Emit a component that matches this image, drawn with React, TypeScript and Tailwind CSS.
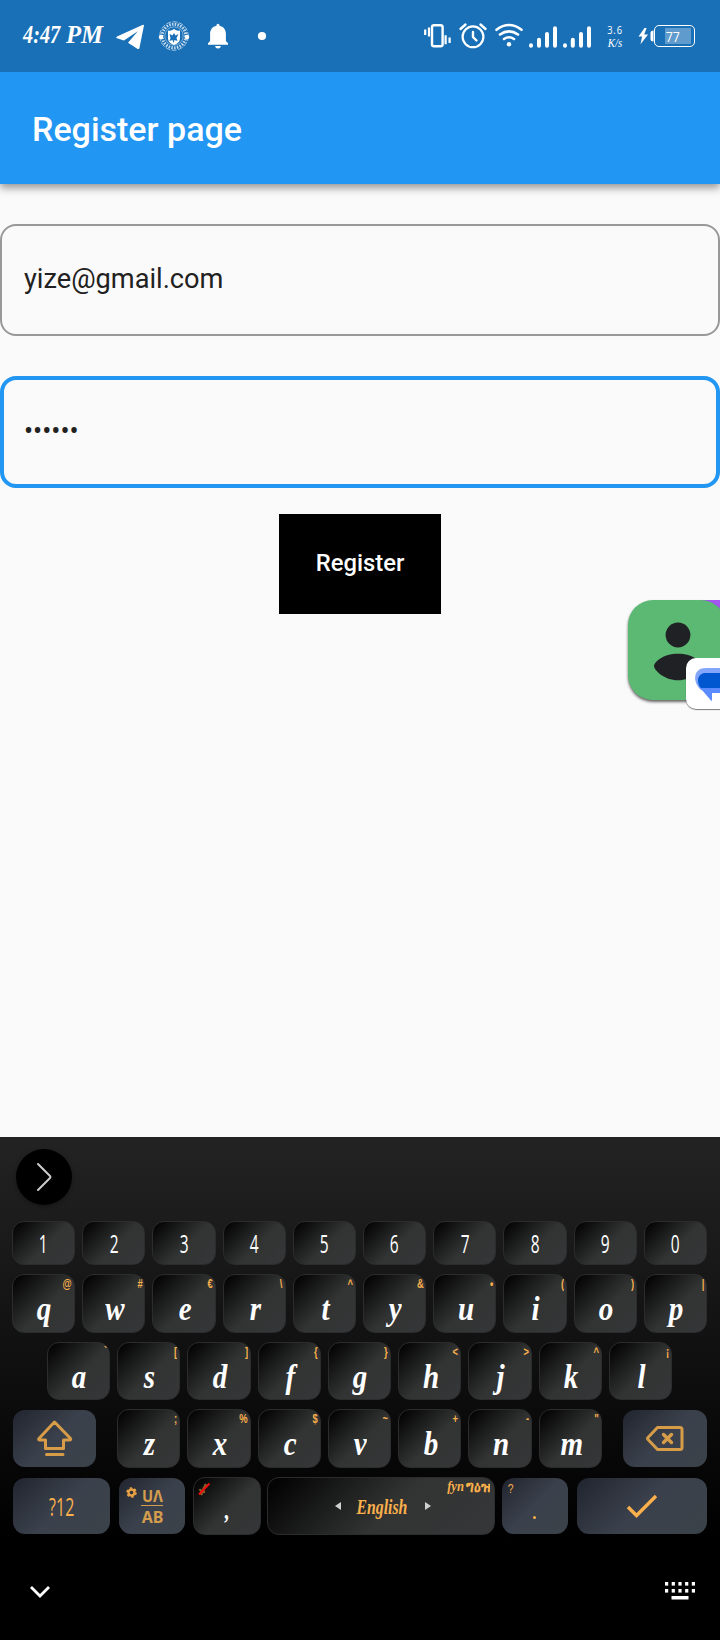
import React from "react";

const FONT_UI = "font-[Roboto,sans-serif]";

function StatusBar() {
  return (
    <header className="relative z-10 flex h-[72px] items-center bg-[#1a70b7] text-white">
      <div className="flex h-full w-[109px] items-center gap-[7px] pl-[23px] pb-[3px] font-['Liberation_Serif',serif] text-[26px] font-bold italic leading-none">
        <span className="w-[36px] origin-left scale-x-[.78] whitespace-nowrap">4:47</span>
        <span className="w-[37px] origin-left scale-x-[.95] whitespace-nowrap">PM</span>
      </div>
      <svg width="171" height="72" viewBox="109 0 171 72" className="shrink-0" fill="white">
        <path d="M144 25.2 139.4 48.2Q138.8 49.6 137.3 48.7L128 42.7 137.8 31.2 123.9 40.4 117 38.3Q115.2 37.4 117 36.4L142.4 25Q144 24.4 144 25.2Z" />
        <g fill="none" stroke="white">
          <circle cx="174" cy="36" r="14.2" strokeWidth="1" strokeDasharray="5 1.500" opacity=".6" />
          <circle cx="174" cy="36" r="9.2" strokeWidth=".8" opacity=".55" />
          <circle cx="174" cy="36" r="11.8" strokeWidth="3" strokeDasharray="1.5 1.3" opacity=".75" />
        </g>
        <circle cx="161" cy="37" r="2.2" />
        <circle cx="187" cy="37" r="2.2" />
        <path d="M168 30.500q3 1 6-1.500 3 2.500 6 1.500v8q0 4-6 6.500q-6-2.500-6-6.500Z" />
        <path d="m169.500 34 3 1.500 1.500-2.500 1.500 2.500 3-1.500-2 4 1 3-3-1-1 3-1-3-3 1 1-3Z" fill="#1a70b7" />
        <path d="M216.500 25.500v-.2a1.500 1.500 0 0 1 3 0v.4c4 .8 6.400 4 6.400 8v7.300l2.100 2.200v1.600h-20v-1.600l2.100-2.200v-7.300c0-4 2.400-7.200 6.400-8ZM215.200 46h5.600a2.800 2.400 0 0 1-5.600 0Z" />
        <circle cx="262" cy="36" r="4.100" />
      </svg>
      <svg width="195" height="72" viewBox="422 0 195 72" className="ml-[142px] shrink-0" fill="none" stroke="white">
        <rect x="432" y="25.200" width="10.600" height="21" rx="2" strokeWidth="2.400" />
        <path d="M425.200 29.500v5.500M429 27.500v9M445.600 35.200v9M449.600 37.500v5.500" strokeWidth="2.200" />
        <circle cx="473" cy="36.800" r="10.400" strokeWidth="2.200" />
        <path d="M473 32v5l3.500 3.500M460.500 29l5-4.500M485.500 29l-5-4.500" strokeWidth="2.400" strokeLinecap="round" />
        <path d="M496.500 29.800q12.500-9.600 25 0M500 34.500q9-6.400 18 0M504 39q5-3.400 10 0" strokeWidth="2.600" strokeLinecap="round" />
        <circle cx="509" cy="44.200" r="2.200" fill="white" stroke="none" />
        <g strokeWidth="4" strokeLinecap="round">
          <path d="M531 45.200v.5M539 39.800v6M547 34v11.800M555 28.300v17.500M565 45.200v.5M572.800 39.800v6M581 34v11.800M589 28.300v17.500" />
        </g>
      </svg>
      <div className="-ml-[12px] mr-[3px] flex w-[20px] shrink-0 flex-col gap-[3px] text-center font-['Open_Sans',sans-serif] text-[11px] leading-[10px]">
        <span className="scale-x-[.85] tracking-[1px]">3.6</span>
        <span className="font-['Liberation_Serif',serif] text-[12px] scale-x-[.9] italic">K/s</span>
      </div>
      <div className="ml-[9px] flex items-center">
        <svg width="17" height="26" viewBox="637 23 17 26" fill="white">
          <path d="m644.500 28-6 8.600h3.600l-1.600 7.700 7.600-9.800h-3.900l2.400-6.500Z" />
          <path d="M653.500 30.500q-3 0-3 2.500v6q0 2.500 3 2.500Z" />
        </svg>
        <div className="flex h-[22px] w-[41px] items-center rounded-[5px] border-[1.500px] border-white p-[2px] pl-[10px]">
          <div className="flex h-full w-[26px] items-center bg-white/30">
            <span className="origin-left scale-x-[.82] pl-[1px] font-['Open_Sans',sans-serif] text-[15px] leading-none">77</span>
          </div>
        </div>
      </div>
    </header>
  );
}

function FloatingBubble() {
  return (
    <div className="absolute left-[624px] top-[594px] h-[124px] w-[96px] overflow-hidden">
      <div className="absolute right-0 top-[6px] h-[40px] w-[30px] bg-[#a357f0]" />
      <div className="absolute left-[4px] top-[6px] h-[100px] w-[98px] rounded-[25px] bg-[#5cb974] shadow-[0_2px_3px_rgba(0,0,0,.6)]" />
      <svg className="absolute left-0 top-0" width="96" height="124" viewBox="624 594 96 124">
        <circle cx="678" cy="635" r="12.400" fill="#202125" />
        <path d="M654 666c0-4 9-12.300 24-12.300s24 8.300 24 12.300-10 14.300-24 14.300-24-10.300-24-14.300Z" fill="#202125" />
      </svg>
      <div className="absolute left-[62px] top-[64px] h-[51px] w-[51px] rounded-[10px] bg-white shadow-[0_1px_1px_rgba(0,0,0,.5)]" />
      <svg className="absolute left-0 top-0" width="96" height="124" viewBox="624 594 96 124">
        <path d="M701 690C692 682 693 668 706 668h14v22Z" fill="#83a6fb" />
        <path d="M698.500 686H720v7h-8v7.300q0 1-1 .2Z" fill="#5a8cff" />
        <path d="M705.500 673H720v15h-19c-5-5-4-15 4.500-15Z" fill="#0057d0" />
      </svg>
    </div>
  );
}

const DARK_KEY =
  "relative flex justify-center rounded-[12px] border border-[#2c2c2d] bg-[linear-gradient(135deg,#040404_5%,#323433_55%,#353638)]";
const BLUE_KEY =
  "relative flex items-center justify-center rounded-[12px] bg-[linear-gradient(135deg,#20242e,#3b414c_50%,#3a4249)]";

function NumberKey({ label }: { label: string }) {
  return (
    <div className={`${DARK_KEY} h-[44px] items-center`}>
      <span className="scale-x-[.62] pt-[1px] font-['Open_Sans',sans-serif] text-[25px] font-medium leading-none text-white">{label}</span>
    </div>
  );
}

function LetterKey({ letter, hint }: { letter: string; hint: string }) {
  return (
    <div className={`${DARK_KEY} h-full`}>
      <span className="scale-x-[.88] pt-[17px] pl-[2px] font-['Liberation_Serif',serif] text-[33px] font-bold italic leading-[34px] text-white">
        {letter}
      </span>
      <span className="absolute right-[2px] top-[3px] origin-right scale-x-[.78] font-['Liberation_Sans',sans-serif] text-[12px] font-bold leading-[12px] text-[#fbb04c]">
        {hint}
      </span>
    </div>
  );
}

const topRow = [["q", "@"], ["w", "#"], ["e", "€"], ["r", "\\"], ["t", "^"], ["y", "&"], ["u", "•"], ["i", "("], ["o", ")"], ["p", "|"]];
const homeRow = [["a", "`"], ["s", "["], ["d", "]"], ["f", "{"], ["g", "}"], ["h", "<"], ["j", ">"], ["k", "^"], ["l", "¡"]];
const lowRow = [["z", ";"], ["x", "%"], ["c", "$"], ["v", "~"], ["b", "+"], ["n", "-"], ["m", "\""]];

function BottomRow() {
  return (
    <div className="mt-[9px] flex h-[58px] items-center pl-[13px]">
      <div className={`${BLUE_KEY} h-[56px] w-[97px]`}>
        <span className="scale-x-[.64] font-['Open_Sans',sans-serif] text-[25px] leading-none text-[#fbb04c]">?12</span>
      </div>
      <div className={`${BLUE_KEY} ml-[9px] h-[56px] w-[66px]`}>
        <svg className="absolute left-[7px] top-[9px]" width="11" height="11" viewBox="0 0 11 11">
          <circle cx="5.500" cy="5.500" r="3" fill="none" stroke="#e9a145" strokeWidth="2.400" />
          <circle cx="5.500" cy="5.500" r="4.500" fill="none" stroke="#e9a145" strokeWidth="1.600" strokeDasharray="2.400 2.310" />
        </svg>
        <div className="flex flex-col items-center pl-[1px] font-['Noto_Sans',sans-serif] text-[16px] font-bold leading-[18px] text-[#d49c4d]">
          <span className="scale-x-[.92]">UΛ</span>
          <span className="mb-[2px] h-[1px] w-[22px] bg-[#d49c4d]" />
          <span>AB</span>
        </div>
      </div>
      <div className={`${DARK_KEY} ml-[8px] h-[58px] w-[68px]`}>
        <svg className="absolute left-[3px] top-[4px]" width="14" height="14" viewBox="0 0 14 14" fill="none">
          <path d="M9 2 6 8M3 7q1 4 5 2.500M5 11l-1 2" stroke="#80602b" strokeWidth="2.500" />
          <path d="M2 12.500 12.500 1.500" stroke="#f10e0e" strokeWidth="2" />
        </svg>
        <span className="scale-x-[.8] pt-[16px] font-['Liberation_Serif',serif] text-[25px] font-bold italic leading-[34px] text-white">,</span>
      </div>
      <div className={`${DARK_KEY} ml-[6px] h-[58px] w-[228px] items-center text-[#fbb04c]`}>
        <span className="absolute left-[67px] top-[24px] border-y-[4px] border-r-[6px] border-y-transparent border-r-[#d0d0d0]" />
        <span className="scale-x-[.79] pt-[2px] pl-[3px] font-['Liberation_Serif',serif] text-[20px] font-bold italic leading-none">English</span>
        <span className="absolute left-[157px] top-[24px] border-y-[4px] border-l-[6px] border-y-transparent border-l-[#d0d0d0]" />
        <span className="absolute right-[4px] top-[1px] flex origin-right scale-x-[.84] items-center gap-[3px] whitespace-nowrap font-['Liberation_Serif',serif] text-[15px] font-bold leading-[15px]">
          <i>fyn</i>
          <span className="font-['Liberation_Sans',sans-serif] text-[16px]">ግዕዝ</span>
        </span>
      </div>
      <div className={`${BLUE_KEY} ml-[7px] h-[56px] w-[66px] font-['Liberation_Sans',sans-serif] text-[#fbb04c]`}>
        <span className="absolute left-[5px] top-[4px] scale-x-[.8] text-[13px] leading-[14px]">?</span>
        <span className="mt-[17px] h-[3px] w-[3px] translate-x-[-1px] translate-y-[3px] rounded-full bg-[#fbb04c]" />
      </div>
      <div className={`${BLUE_KEY} ml-[9px] h-[56px] w-[130px]`}>
        <svg width="34" height="26" viewBox="0 0 34 26" fill="none">
          <path d="m3 14 8.500 8.500L31 3" stroke="#fbb04c" strokeWidth="3.400" />
        </svg>
      </div>
    </div>
  );
}

function Keyboard() {
  return (
    <section className="h-[503px] bg-[linear-gradient(#232323,#000_405px)]">
      <div className="flex h-[84px] pl-[16px] pt-[12px]">
        <div className="flex h-[56px] w-[56px] items-center justify-center rounded-full bg-black shadow-[0_2px_4px_rgba(0,0,0,.3)]">
          <svg width="18" height="32" viewBox="0 0 18 32" fill="none">
            <path d="M3 3 15 15Q16 16 15 17L3 29" stroke="#ccc" strokeWidth="2" strokeLinecap="round" />
          </svg>
        </div>
      </div>
      <div className="grid grid-cols-10 gap-x-[7px] pl-[12px] pr-[13px]">
        {"1234567890".split("").map((n) => <NumberKey key={n} label={n} />)}
      </div>
      <div className="mt-[9px] grid h-[59px] grid-cols-10 gap-x-[7px] pl-[12px] pr-[13px]">
        {topRow.map(([l, h]) => <LetterKey key={l} letter={l} hint={h} />)}
      </div>
      <div className="mt-[9px] grid h-[58px] grid-cols-9 gap-x-[7px] pl-[47px] pr-[48px]">
        {homeRow.map(([l, h]) => <LetterKey key={l} letter={l} hint={h} />)}
      </div>
      <div className="mt-[9px] flex h-[59px] items-center px-[13px]">
        <div className={`${BLUE_KEY} h-[57px] w-[83px]`}>
          <svg width="38" height="38" viewBox="0 1 38 38" fill="none" stroke="#d69c48" strokeWidth="3" strokeLinejoin="round" strokeLinecap="round">
            <path d="M18.500 3 34.500 19.500Q35 21 33.500 21H27.500V29.500H9.500V21H4Q2 21 3 19.500ZM10.500 35.500H27" />
          </svg>
        </div>
        <div className="ml-[21px] mr-[21px] grid h-full flex-1 grid-cols-7 gap-x-[7px]">
          {lowRow.map(([l, h]) => <LetterKey key={l} letter={l} hint={h} />)}
        </div>
        <div className={`${BLUE_KEY} h-[57px] w-[84px]`}>
          <svg width="40" height="28" viewBox="0 0.500 40 28" fill="none" stroke="#d69c48" strokeWidth="3" strokeLinejoin="round">
            <path d="M12.500 3H35Q37 3 37 5V23Q37 25 35 25H12.500L3 15Q2 14 3 13Z" />
            <path d="m18.500 10 8 8m0-8-8 8" strokeWidth="3.400" strokeLinecap="round" />
          </svg>
        </div>
      </div>
      <BottomRow />
      <div className="flex h-[105px] items-center justify-between px-[24px] pt-[7px]">
        <svg width="32" height="20" viewBox="24 1582 32 20" fill="none">
          <path d="m31 1588 9 9 9-9" stroke="white" strokeWidth="2.800" />
        </svg>
        <svg width="32" height="26" viewBox="664 1580 32 26" fill="white">
          {[0, 1, 2, 3, 4].map((i) => (
            <React.Fragment key={i}>
              <rect x={665 + i * 6.700} y="1584" width="3.200" height="3.600" />
              <rect x={665 + i * 6.700} y="1591" width="3.200" height="3.600" />
            </React.Fragment>
          ))}
          <rect x="671.500" y="1598" width="17" height="3.500" />
        </svg>
      </div>
    </section>
  );
}

export default function App() {
  return (
    <div className={`relative flex h-[1640px] w-[720px] flex-col overflow-hidden bg-[#fafafa] ${FONT_UI}`}>
      <StatusBar />
      <div className="flex h-[112px] shrink-0 items-center bg-[#2196f3] pl-[32px] pt-[2px] shadow-[0_4px_8px_rgba(0,0,0,.4)]">
        <h1 className="text-[34px] font-medium leading-none text-white">Register page</h1>
      </div>
      <main className="flex flex-1 flex-col items-center pt-[40px]">
        <div className="flex h-[112px] w-full items-center rounded-[16px] border-2 border-[#999] px-[22px] pb-[2px] text-[27.200px] text-[#212121]">
          yize@gmail.com
        </div>
        <div className="mt-[40px] flex h-[112px] w-full items-center rounded-[16px] border-4 border-[#2196f3] px-[20px] pb-[2px] text-[27px] text-[#212121]">
          ••••••
        </div>
        <button className="mt-[26px] h-[100px] w-[162px] bg-black text-[23.800px] font-medium text-white">Register</button>
      </main>
      <Keyboard />
      <FloatingBubble />
    </div>
  );
}
